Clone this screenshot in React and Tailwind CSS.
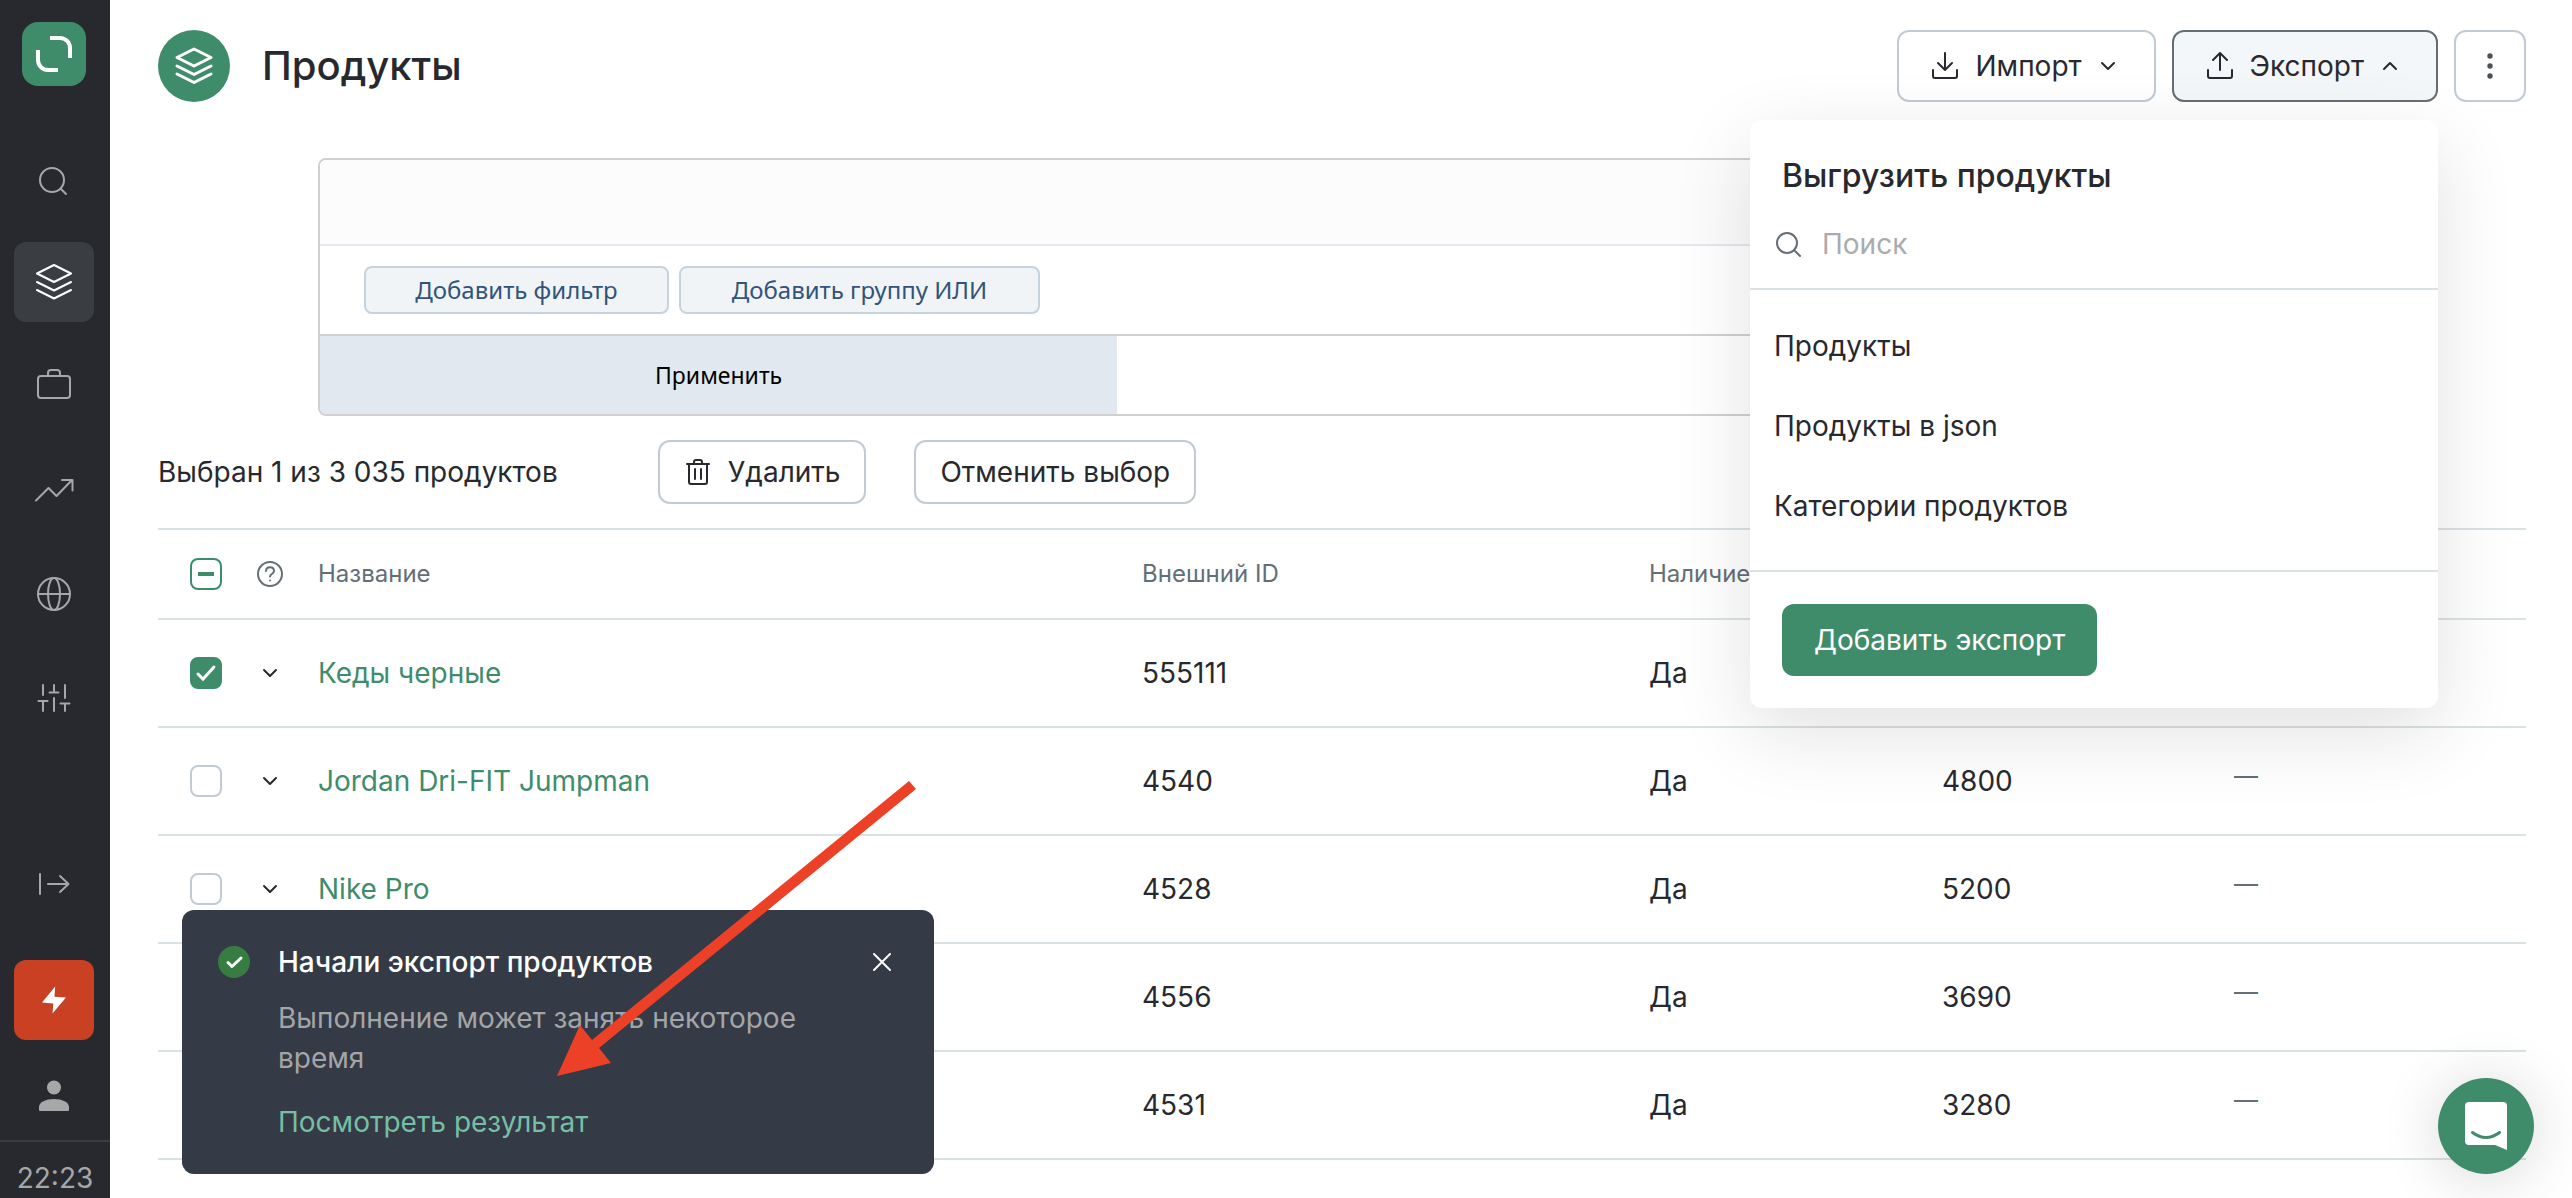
import React, { useState } from 'react';

const Icon = ({ size = 'size-10', box = 40, width = 2, children }) => (
    <svg
        className={`${size} shrink-0`}
        viewBox={`0 0 ${box} ${box}`}
        fill="none"
        stroke="currentColor"
        strokeWidth={width}
        strokeLinecap="round"
        strokeLinejoin="round"
        aria-hidden="true"
    >
        {children}
    </svg>
);

const LayersIcon = ({ width }) => (
    <Icon width={width}>
        <path d="M20 3 37 11.500 20 20 3 11.500zM3 20l17 8.500L37 20M3 28l17 8.500L37 28" />
    </Icon>
);

const Chevron = ({ up }) => (
    <Icon size="size-5" box={20}>
        <path d={up ? 'm4 13 6-6 6 6' : 'm4 7 6 6 6-6'} />
    </Icon>
);

const menu = [
    {
        label: 'Поиск',
        icon: (
            <Icon>
                <circle cx="18" cy="22" r="12" />
                <path d="m27 31 5 5" />
            </Icon>
        ),
    },
    { label: 'Продукты', active: true, icon: <LayersIcon /> },
    {
        label: 'Компании',
        icon: (
            <Icon>
                <rect x="4" y="10" width="32" height="22" rx="3" />
                <path d="M14 10V7a3 3 0 0 1 3-3h6a3 3 0 0 1 3 3v3" />
            </Icon>
        ),
    },
    {
        label: 'Аналитика',
        icon: (
            <Icon>
                <path d="M2 30.500 14.500 18l8 8L38 10M28 10h10.500v10.500" />
            </Icon>
        ),
    },
    {
        label: 'Сайт',
        icon: (
            <Icon>
                <circle cx="20" cy="20" r="16" />
                <ellipse cx="20" cy="20" rx="6" ry="16" />
                <path d="M4 20h32" />
            </Icon>
        ),
    },
    {
        label: 'Настройки',
        icon: (
            <Icon>
                <path d="M9 7v10M4.500 23h9M9 23v10M20 7v7M15.500 14.500h9M20 20v13M31 7v13M26.500 25.500h9M31 26v7" />
            </Icon>
        ),
    },
];

const productos = [
    { name: 'Кеды черные', id: '555111' },
    { name: 'Jordan Dri-FIT Jumpman', id: '4540', price: '4800' },
    { name: 'Nike Pro', id: '4528', price: '5200' },
    { name: '', id: '4556', price: '3690' },
    { name: '', id: '4531', price: '3280' },
];

const exports = ['Продукты', 'Продукты в json', 'Категории продуктов'];

const Sidebar = () => (
    <aside className="sticky top-0 flex h-screen w-[110px] shrink-0 flex-col bg-[#28292e] text-[#a6a7a9]">
        <a href="#home" aria-label="Главная" className="mt-[22px] ml-[22px] size-16 rounded-2xl bg-[#3f8c6b] text-white">
            <svg className="size-16" viewBox="0 0 64 64" fill="none" stroke="currentColor" strokeWidth="4" aria-hidden="true">
                <path d="M28 16h10a10 10 0 0 1 10 10v10M16 28v10a10 10 0 0 0 10 10h10" />
            </svg>
        </a>
        <nav className="mt-[52px] ml-3.5 flex flex-col gap-6">
            {menu.map((item) => (
                <a
                    key={item.label}
                    href="#menu"
                    aria-label={item.label}
                    className={`flex size-20 items-center justify-center rounded-xl ${
                        item.active ? 'bg-[#3a3d42] text-white' : ''
                    }`}
                >
                    {item.icon}
                </a>
            ))}
        </nav>
        <div className="mt-auto ml-3.5 flex flex-col">
            <button aria-label="Развернуть меню" className="flex size-20 items-center justify-center">
                <Icon>
                    <path d="M6 10v20M14 20h20.500M26 12l8.500 8-8.500 8" />
                </Icon>
            </button>
            <button aria-label="Быстрые действия" className="mt-9 flex size-20 items-center justify-center rounded-xl bg-[#c94022] text-white">
                <svg className="size-10" viewBox="0 0 40 40" fill="currentColor" aria-hidden="true">
                    <path d="M21.200 6.500 8 22.500l11.300 1L18.500 33.500 32 17.500l-11.500-.8z" />
                </svg>
            </button>
            <button aria-label="Профиль" className="mt-4 flex size-20 items-center justify-center">
                <svg className="size-10" viewBox="0 0 40 40" fill="currentColor" aria-hidden="true">
                    <circle cx="20" cy="11.500" r="7" />
                    <path d="M5 34v-3c0-5 7-8 15-8s15 3 15 8v3q0 1-1 1H6q-1 0-1-1z" />
                </svg>
            </button>
        </div>
        <div className="mt-1 border-t-2 border-[#3a3d42] pt-4 text-center text-[28px] leading-10">22:23</div>
    </aside>
);

const ExportMenu = () => (
    <div className="absolute top-full right-0 z-20 mt-[18px] w-[688px] rounded-xl bg-white shadow-[0_24px_80px_rgba(0,0,0,0.12)]">
        <div className="border-b-2 border-[#dbe2e6] pb-6">
            <h2 className="px-8 pt-9 text-[32px] leading-10 font-medium">Выгрузить продукты</h2>
            <div className="mt-7 flex items-center gap-5 pl-6 text-[#636f75]">
                <Icon size="size-7" box={28}>
                    <circle cx="13" cy="13" r="10" />
                    <path d="m21 21 5 5" />
                </Icon>
                <input
                    type="text"
                    aria-label="Поиск"
                    placeholder="Поиск"
                    className="h-10 min-w-0 grow text-[28px] outline-none placeholder:text-[#aaabad]"
                />
            </div>
        </div>
        <ul className="border-b-2 border-[#dbe2e6] pt-4 pb-6">
            {exports.map((item) => (
                <li key={item}>
                    <button className="h-20 w-full px-6 text-left">{item}</button>
                </li>
            ))}
        </ul>
        <div className="p-8">
            <button className="h-[72px] rounded-xl bg-[#3f8c6b] px-8 text-white">Добавить экспорт</button>
        </div>
    </div>
);

const Header = () => (
    <header className="flex items-center justify-between">
        <div className="flex items-center gap-8">
            <span className="flex size-[72px] items-center justify-center rounded-full bg-[#3f8c6b] text-white">
                <LayersIcon width={3} />
            </span>
            <h1 className="text-[40px] leading-[48px] font-medium">Продукты</h1>
        </div>
        <div className="flex gap-4">
            <button className="flex h-[72px] items-center gap-4 rounded-xl border-2 border-[#c0cbd4] bg-white pr-9 pl-8">
                <Icon size="size-7" box={28}>
                    <path d="M14 1v17M7 11l7 7 7-7M2 18v6a2 2 0 0 0 2 2h20a2 2 0 0 0 2-2v-6" />
                </Icon>
                Импорт
                <Chevron />
            </button>
            <div className="relative">
                <button
                    aria-expanded="true"
                    className="flex h-[72px] items-center gap-4 rounded-xl border-2 border-[#636f75] bg-[#f3f7f9] pr-9 pl-8"
                >
                    <Icon size="size-7" box={28}>
                        <path d="M14 18V1M7 8l7-7 7 7M2 18v6a2 2 0 0 0 2 2h20a2 2 0 0 0 2-2v-6" />
                    </Icon>
                    Экспорт
                    <Chevron up />
                </button>
                <ExportMenu />
            </div>
            <button
                aria-label="Ещё"
                className="flex size-[72px] items-center justify-center rounded-xl border-2 border-[#c0cbd4] bg-white text-[#4b5155]"
            >
                <svg className="size-8" viewBox="0 0 32 32" fill="currentColor" aria-hidden="true">
                    <circle cx="16" cy="6" r="2.700" />
                    <circle cx="16" cy="16" r="2.700" />
                    <circle cx="16" cy="26" r="2.700" />
                </svg>
            </button>
        </div>
    </header>
);

const Filters = () => (
    <section className="mx-40 mt-14 overflow-hidden rounded-lg border-2 border-[#d0d0d0] font-['Noto_Sans',sans-serif]">
        <div className="h-[86px] border-b-2 border-[#e2e8ee] bg-[#fcfcfc]" />
        <div className="flex gap-2.5 px-11 py-5 text-2xl text-[#31547a]">
            <button className="h-12 w-[305px] rounded-lg border-2 border-[#c5d3df] bg-[#f1f4f7]">Добавить фильтр</button>
            <button className="h-12 w-[361px] rounded-lg border-2 border-[#c5d3df] bg-[#f1f4f7]">Добавить группу ИЛИ</button>
        </div>
        <div className="flex border-t-2 border-[#d0d0d0]">
            <button className="h-[78px] w-[39%] bg-[#e1e8ef] text-[23px] text-black">Применить</button>
        </div>
    </section>
);

const Checkbox = ({ label, checked, mixed, onChange }) => (
    <span className="mx-auto grid size-8">
        <input
            type="checkbox"
            aria-label={label}
            checked={checked}
            ref={(el) => {
                if (el) el.indeterminate = Boolean(mixed);
            }}
            onChange={onChange}
            className="size-8 appearance-none rounded-lg border-2 border-[#c0cbd4] bg-white [grid-area:1/1] checked:border-[#3f8c6b] checked:bg-[#3f8c6b] indeterminate:border-[#3f8c6b]"
        />
        <svg className="pointer-events-none size-8 [grid-area:1/1]" viewBox="0 0 32 32" fill="none" strokeWidth="4" aria-hidden="true">
            {mixed && <path d="M8 16h16" stroke="#3f8c6b" />}
            {checked && !mixed && <path d="m8 17 5 5L24 10" stroke="#fff" strokeWidth="3" strokeLinecap="round" />}
        </svg>
    </span>
);

const ProductTable = () => {
    const [selected, setSelected] = useState(['555111']);
    const toggle = (id) => setSelected(selected.includes(id) ? selected.filter((s) => s !== id) : [...selected, id]);

    return (
        <table className="mt-6 w-full table-fixed border-collapse text-left">
            <colgroup>
                <col className="w-24" />
                <col className="w-8" />
                <col />
                <col className="w-[507px]" />
                <col className="w-[293px]" />
                <col className="w-[292px]" />
                <col className="w-[292px]" />
            </colgroup>
            <thead>
                <tr className="h-[90px] border-y-2 border-[#dbe2e6] text-2xl text-[#636f75]">
                    <th className="font-normal">
                        <Checkbox label="Выбрать все" checked={false} mixed={selected.length > 0} onChange={() => setSelected([])} />
                    </th>
                    <th>
                        <Icon size="size-8" box={32}>
                            <circle cx="16" cy="16" r="12" />
                            <path d="M12 13c0-5 8-5 8 0 0 3-4 3-4 5.500M16 22.500v.1" />
                        </Icon>
                    </th>
                    <th className="pl-8 font-normal">Название</th>
                    <th className="font-normal">Внешний ID</th>
                    <th className="font-normal">Наличие</th>
                    <th aria-label="Цена" />
                    <th aria-label="Старая цена" />
                </tr>
            </thead>
            <tbody>
                {productos.map((p) => (
                    <tr key={p.id} className="h-[108px] border-b-2 border-[#dbe2e6]">
                        <td>
                            <Checkbox label={p.name || p.id} checked={selected.includes(p.id)} onChange={() => toggle(p.id)} />
                        </td>
                        <td>
                            <button aria-label="Развернуть" className="mx-auto block">
                                <Chevron />
                            </button>
                        </td>
                        <td className="pl-8">
                            <a href="#product" className="text-[#3f8c6b]">{p.name}</a>
                        </td>
                        <td>{p.id}</td>
                        <td>Да</td>
                        <td>{p.price}</td>
                        <td className="pb-2.5 text-2xl text-[#636f75]">{p.price && '—'}</td>
                    </tr>
                ))}
            </tbody>
        </table>
    );
};

const Toast = () => (
    <div role="status" className="fixed bottom-6 left-[182px] z-30 flex w-[752px] items-start rounded-xl bg-[#343a46] px-9 py-8">
        <svg className="mt-1 size-8 shrink-0" viewBox="0 0 32 32" fill="none" aria-hidden="true">
            <circle cx="16" cy="16" r="16" fill="#377d42" />
            <path d="m10 16.500 4 4 9-8.500" stroke="#fff" strokeWidth="3" strokeLinecap="round" strokeLinejoin="round" />
        </svg>
        <div className="ml-7 grow">
            <p className="font-medium text-white">Начали экспорт продуктов</p>
            <p className="mt-4 text-[#a4a5a7]">
                Выполнение может занять некоторое
                <br />
                время
            </p>
            <a href="#result" className="mt-6 block text-[#76bfa5]">Посмотреть результат</a>
        </div>
        <button aria-label="Закрыть" className="mt-1 text-white">
            <Icon size="size-8" box={32}>
                <path d="m8 8 16 16M24 8 8 24" />
            </Icon>
        </button>
    </div>
);

const App = () => (
    <div className="flex h-screen items-start overflow-hidden bg-white font-['Inter',sans-serif] text-[28px] leading-10 text-[#28292e]">
        <Sidebar />
        <main className="min-w-0 grow pt-[30px] pr-[46px] pl-12">
            <Header />
            <Filters />
            <div className="mt-6 flex items-center">
                <p>Выбран 1 из 3 035 продуктов</p>
                <button className="ml-25 flex h-16 items-center gap-4 rounded-xl border-2 border-[#c0cbd4] px-6">
                    <Icon size="size-7" box={28}>
                        <path d="M3 6h22M10 6V4a2 2 0 0 1 2-2h4a2 2 0 0 1 2 2v2M5 6v18a2 2 0 0 0 2 2h14a2 2 0 0 0 2-2V6M11 11v10M17 11v10" />
                    </Icon>
                    Удалить
                </button>
                <button className="ml-12 h-16 rounded-xl border-2 border-[#c0cbd4] px-6">Отменить выбор</button>
            </div>
            <ProductTable />
        </main>
        <Toast />
        {/* Стрелка-подсказка поверх уведомления */}
        <svg className="pointer-events-none fixed bottom-[122px] left-[557px] z-40 h-[296px] w-[360px]" viewBox="0 0 360 296" fill="#ec4126" aria-hidden="true">
            <path d="M352 1 359 9 42 268 54 283 0 296 23 245 35 260z" />
        </svg>
        <button
            aria-label="Открыть чат"
            className="fixed right-[38px] bottom-6 z-30 size-24 rounded-full bg-[#3f8c6b] shadow-[0_4px_60px_rgba(0,0,0,0.16)]"
        >
            <svg className="size-24" viewBox="0 0 96 96" fill="none" aria-hidden="true">
                <path d="M31 24h34q4 0 4 4v44l-12-5H31q-4 0-4-4V28q0-4 4-4z" fill="#fff" />
                <path d="M34.500 54.500q13.500 10 27 0" stroke="#3f8c6b" strokeWidth="3" strokeLinecap="round" />
            </svg>
        </button>
    </div>
);

export default App;
